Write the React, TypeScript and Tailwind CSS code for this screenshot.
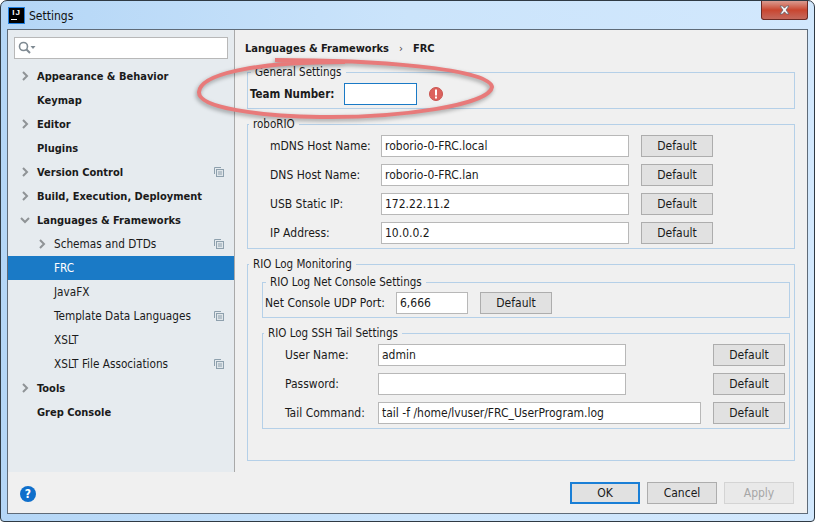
const FONT = "font-['DejaVu_Sans_Condensed','DejaVu_Sans',sans-serif]";

const Chevron = ({ down = false }: { down?: boolean }) => (
  <svg width="10" height="10" viewBox="0 0 10 10" fill="none" stroke="#8f9396" strokeWidth="2">
    {down ? <path d="M1 3l4 4 4-4" /> : <path d="M3 1l4 4-4 4" />}
  </svg>
);

const CopyIcon = () => (
  <svg width="10" height="10" viewBox="0 0 10 10" fill="none" stroke="#8ea0ad">
    <path d="M0.5 7V0.5H7" />
    <rect x="2.5" y="2.5" width="7" height="7" fill="#dfe5e9" />
    <path d="M4 5h4M4 7h4" />
  </svg>
);

const items = [
  { label: "Appearance & Behavior", bold: true, arrow: "right" },
  { label: "Keymap", bold: true },
  { label: "Editor", bold: true, arrow: "right" },
  { label: "Plugins", bold: true },
  { label: "Version Control", bold: true, arrow: "right", copy: true },
  { label: "Build, Execution, Deployment", bold: true, arrow: "right" },
  { label: "Languages & Frameworks", bold: true, arrow: "down" },
  { label: "Schemas and DTDs", sub: true, arrow: "right", copy: true },
  { label: "FRC", sub: true, selected: true },
  { label: "JavaFX", sub: true },
  { label: "Template Data Languages", sub: true, copy: true },
  { label: "XSLT", sub: true },
  { label: "XSLT File Associations", sub: true, copy: true },
  { label: "Tools", bold: true, arrow: "right" },
  { label: "Grep Console", bold: true },
];

const Row = ({ item }: { item: (typeof items)[number] }) => (
  <div
    className={`flex items-center h-6 pr-[10px] ${item.selected ? "bg-[#1a7ac6] text-white" : "text-[#1a1a1a]"} ${
      item.bold ? "font-bold text-[11px]" : "text-[11.7px]"
    } ${item.sub ? "pl-[29px]" : "pl-[12px]"}`}
  >
    <span className="w-4 shrink-0 flex">{item.arrow && <Chevron down={item.arrow === "down"} />}</span>
    <span className="flex-1 whitespace-nowrap pl-[1px] pt-[2px]">{item.label}</span>
    {item.copy && <CopyIcon />}
  </div>
);

const Field = ({ value = "", w }: { value?: string; w: string }) => (
  <div className={`${w} h-[22px] bg-white border border-[#b8b8b8] px-[3px] flex items-center text-[#1a1a1a] shrink-0`}>{value}</div>
);

const DefaultBtn = () => (
  <div className="w-[72px] h-[22px] bg-[#e1e1e1] border border-[#adadad] flex items-center justify-center text-[#1a1a1a] shrink-0">
    Default
  </div>
);

const Legend = ({ children }: { children: string }) => (
  <legend className="px-[4px] ml-[1px] h-[14px] leading-[15px] text-[11.5px] text-[#1a1a1a]">{children}</legend>
);

const HostRow = ({ label, value }: { label: string; value: string }) => (
  <div className="flex items-center">
    <span className="w-[133px] pl-[22px] shrink-0 whitespace-nowrap">{label}</span>
    <Field value={value} w="w-[248px]" />
    <span className="w-3 shrink-0" />
    <DefaultBtn />
  </div>
);

const SshRow = ({ label, value, w = "w-[248px]", gap = "w-[87px]" }: { label: string; value?: string; w?: string; gap?: string }) => (
  <div className="flex items-center">
    <span className="w-[115px] pl-[22px] shrink-0 whitespace-nowrap">{label}</span>
    <Field value={value} w={w} />
    <span className={`${gap} shrink-0`} />
    <DefaultBtn />
  </div>
);

export default function App() {
  return (
    <div className={`relative w-[815px] h-[522px] overflow-hidden bg-white ${FONT} text-[12px]`}>
      <div className="w-full h-full flex flex-col rounded-t-[7px] rounded-b-[4px] border border-[#2f3a44] bg-gradient-to-r from-[#b4d6f6] via-[#cbe4fb] to-[#d2e8fd]">
        {/* title bar */}
        <div className="h-[28px] shrink-0 flex items-start pl-[7px] pt-[6px]">
          <div className="w-[17px] h-[17px] bg-black border border-[#1f7fe0] text-white text-[8px] font-['Liberation_Sans',sans-serif] font-bold leading-[10px] tracking-[1px] text-center shrink-0">
            IJ
            <div className="w-[6px] h-px bg-white ml-[2px] mt-[1px]" />
          </div>
          <span className="ml-[4px] text-[12px] leading-[18px] text-[#111]">Settings</span>
          <div className="ml-auto mr-[6px] -mt-[6px] w-[47px] h-[19px] rounded-b-[3px] border border-t-0 border-[#6b2a24] bg-gradient-to-b from-[#d99a90] via-[#c9452f] to-[#c4685c] flex items-center justify-center">
            <svg width="13" height="10" viewBox="0 0 13 10">
              <path d="M2 1h2.500l2 2.200L8.500 1H11L8 5l3 4H8.500L6.500 6.800 4.500 9H2l3-4z" fill="#fff" stroke="#5d6470" strokeWidth="0.8" />
            </svg>
          </div>
        </div>

        {/* client area */}
        <div className="flex-1 mx-[6px] mb-[7px] border border-[#5f6b78] bg-[#f0f0f0] flex flex-col min-h-0">
          <div className="flex-1 flex min-h-0">
            {/* sidebar */}
            <div className="w-[226px] shrink-0 bg-[#e6ebef] border-r border-[#a9a9a9] box-content">
              <div className="mx-[6px] mt-[7px] h-[22px] bg-white border border-[#b8b8b8] flex items-center pl-[3px]">
                <svg width="18" height="14" viewBox="0 0 18 14" fill="none">
                  <circle cx="5.500" cy="5.500" r="4" stroke="#7f8a92" strokeWidth="1.600" />
                  <path d="M8.500 8.500l3.500 3.500" stroke="#7f8a92" strokeWidth="2" />
                  <path d="M12.500 5h5l-2.500 3z" fill="#7f8a92" />
                </svg>
              </div>
              <div className="mt-[5px]">
                {items.map((item) => (
                  <Row key={item.label} item={item} />
                ))}
              </div>
            </div>

            {/* content */}
            <div className="flex-1 pl-3 pr-[12px] min-w-0 text-[#1a1a1a]">
              <div className="h-[35px] -ml-[2px] flex items-center font-bold text-[11px] pt-[3px]">
                Languages &amp; Frameworks
                <span className="w-6 text-center font-normal text-[#444]">›</span>
                FRC
              </div>

              <fieldset className="border border-[#b5d0e8] h-[44px] px-[2px] pb-[3px]">
                <Legend>General Settings</Legend>
                <div className="flex items-center pt-1">
                  <span className="font-bold text-[11.500px] w-[94px] pt-[2px] whitespace-nowrap">Team Number:</span>
                  <div className="w-[73px] h-[22px] bg-white border border-[#1a7ac6] shrink-0" />
                  <svg className="ml-[12px]" width="14" height="14" viewBox="0 0 14 14">
                    <circle cx="7" cy="7" r="6.500" fill="#dc625d" stroke="#c95450" />
                    <rect x="6" y="2.500" width="2" height="6" fill="#fff" />
                    <rect x="6" y="9.500" width="2" height="2" fill="#fff" />
                  </svg>
                </div>
              </fieldset>

              <fieldset className="mt-2 border border-[#b5d0e8] pb-1">
                <Legend>roboRIO</Legend>
                <div className="flex flex-col gap-[7px] pt-1">
                  <HostRow label="mDNS Host Name:" value="roborio-0-FRC.local" />
                  <HostRow label="DNS Host Name:" value="roborio-0-FRC.lan" />
                  <HostRow label="USB Static IP:" value="172.22.11.2" />
                  <HostRow label="IP Address:" value="10.0.0.2" />
                </div>
              </fieldset>

              <fieldset className="mt-2 border border-[#b5d0e8] h-[204px]">
                <Legend>RIO Log Monitoring</Legend>
                <div className="pl-[14px] pr-1">
                  <fieldset className="mt-1 border border-[#b5d0e8] pl-[2px] pb-[3px]">
                    <Legend>RIO Log Net Console Settings</Legend>
                    <div className="flex items-center pt-[3px]">
                      <span className="w-[131px] whitespace-nowrap">Net Console UDP Port:</span>
                      <Field value="6,666" w="w-[72px]" />
                      <span className="w-3 shrink-0" />
                      <DefaultBtn />
                    </div>
                  </fieldset>
                  <fieldset className="mt-2 border border-[#b5d0e8] pb-1">
                    <Legend>RIO Log SSH Tail Settings</Legend>
                    <div className="flex flex-col gap-[7px] pt-1">
                      <SshRow label="User Name:" value="admin" />
                      <SshRow label="Password:" />
                      <SshRow label="Tail Command:" value="tail -f /home/lvuser/FRC_UserProgram.log" w="w-[323px]" gap="w-3" />
                    </div>
                  </fieldset>
                </div>
              </fieldset>
            </div>
          </div>

          {/* footer */}
          <div className="h-[41px] shrink-0 flex items-start pt-[10px] pl-[12px] pr-[13px] bg-[#f0f0f0]">
            <div className="mt-1 w-4 h-4 rounded-full bg-[#0f6fcb] text-white text-[12px] font-bold leading-4 text-center">?</div>
            <div className="ml-auto flex gap-[7px]">
              <div className="w-[70px] h-[22px] bg-[#e1e1e1] border-2 border-[#1a7fd6] flex items-center justify-center text-[#1a1a1a]">OK</div>
              <div className="w-[70px] h-[22px] bg-[#e1e1e1] border border-[#adadad] flex items-center justify-center text-[#1a1a1a]">Cancel</div>
              <div className="w-[70px] h-[22px] bg-[#e9e9e9] border border-[#d4d4d4] flex items-center justify-center text-[#a6a6a6]">Apply</div>
            </div>
          </div>
        </div>
      </div>

      {/* red annotation ellipse */}
      <svg className="absolute left-0 top-0 pointer-events-none drop-shadow-[-1px_2px_2px_rgba(0,0,0,0.35)]" width="815" height="522" fill="none">
        <path
          d="M275 60C370 60 490 68 492 87C490 105 400 118 320 117C260 116 198 108 199 92C200 75 250 62 345 62"
          stroke="#e87a7a"
          strokeWidth="4"
        />
      </svg>
    </div>
  );
}
